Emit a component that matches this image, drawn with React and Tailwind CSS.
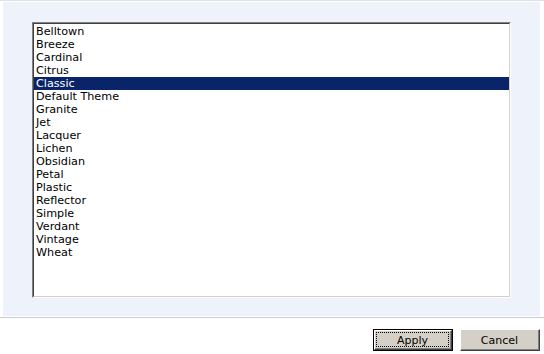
import React from "react";

const themes = [
  "Belltown",
  "Breeze",
  "Cardinal",
  "Citrus",
  "Classic",
  "Default Theme",
  "Granite",
  "Jet",
  "Lacquer",
  "Lichen",
  "Obsidian",
  "Petal",
  "Plastic",
  "Reflector",
  "Simple",
  "Verdant",
  "Vintage",
  "Wheat",
];

const App = () => {
  const selected = "Classic";
  return (
    <div
      className="w-[544px] h-[354px] bg-white text-black overflow-hidden"
      style={{ fontFamily: "'DejaVu Sans', Verdana, sans-serif" }}
    >
      <div className="border-t border-[#dde1e8] pt-[1px] border-b border-b-[#c9cbd0] pl-[3px] pr-[4px] pb-[1px]">
        <div className="h-[314px] bg-[#edf2fb] pl-[29px] pt-[20px]">
          <div className="w-[479px] h-[276px] border-t border-l border-[#808080] border-b border-r border-b-[#ffffff] border-r-[#ffffff]">
            <div className="h-full border-t border-l border-[#404040] border-b border-r border-b-[#d4d0c8] border-r-[#d4d0c8] bg-white pt-[1px]">
              {themes.map((t) => (
                <div
                  key={t}
                  className={
                    "h-[13px] leading-[13px] text-[11.2px] px-[2px] " +
                    (t === selected ? "bg-[#0a246a] text-white" : "")
                  }
                >
                  {t}
                </div>
              ))}
            </div>
          </div>
        </div>
      </div>
      <div className="flex justify-end gap-[7px] pr-[4px] pt-[11px]">
        <button className="w-[80px] h-[22px] border border-black bg-[#d4d0c8] p-0">
          <div className="h-full border-t border-l border-white border-b border-r border-b-[#404040] border-r-[#404040]">
            <div className="h-full border-b border-r border-[#808080] p-[1px]">
              <div className="h-full border border-dotted border-black flex items-center justify-center text-[11px] leading-none pt-[2px]">
                Apply
              </div>
            </div>
          </div>
        </button>
        <button className="w-[80px] h-[22px] bg-[#d4d0c8] p-0 border-t border-l border-white border-b border-r border-b-[#404040] border-r-[#404040]">
          <div className="h-full border-b border-r border-[#808080] flex items-center justify-center text-[11px] leading-none pt-[1px]">
            Cancel
          </div>
        </button>
      </div>
    </div>
  );
};

export default App;
